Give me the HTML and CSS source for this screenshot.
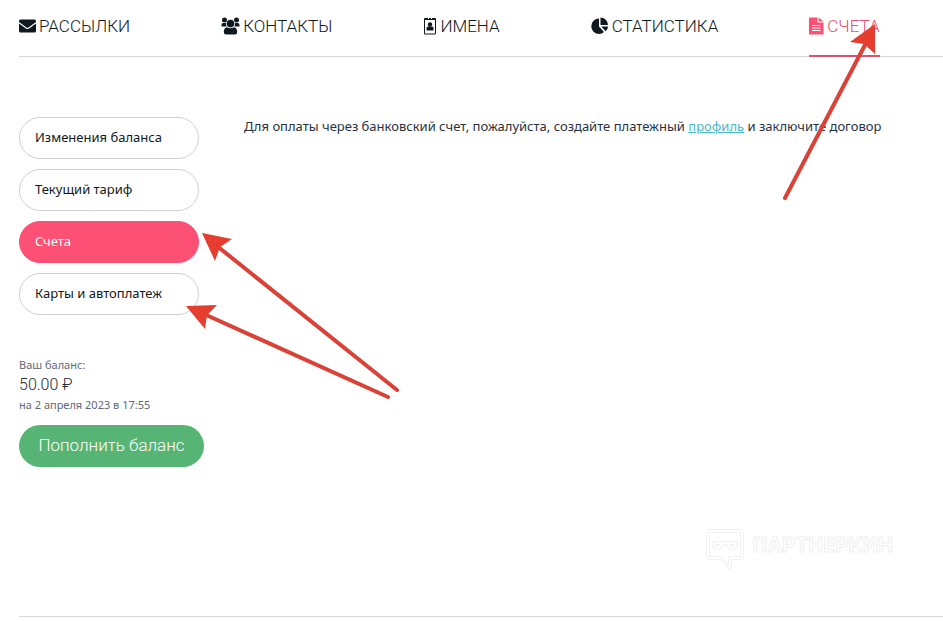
FILE: index.html
```html
<!DOCTYPE html>
<html lang="ru">
<head>
    <meta charset="UTF-8">
    <meta name="viewport" content="width=device-width, initial-scale=1.0">
    <title>Счета</title>
    <link rel="stylesheet" href="styles.css">
</head>
<body>
    <!-- Main menu -->
    <nav class="main-menu">
        <a href="#">
            <svg width="17" height="14" viewBox="0 0 17 14"><path d="M1.500 0.500H15.500Q17 0.500 17 2V3L9.500 8.400Q8.500 9 7.500 8.400L0 3V2Q0 0.500 1.500 0.500ZM0 4.600L6.900 9.500Q8.500 10.500 10.100 9.500L17 4.600V12Q17 13.500 15.500 13.500H1.500Q0 13.500 0 12Z"/></svg>
            <span>РАССЫЛКИ</span>
        </a>
        <a href="#">
            <svg width="19" height="18" viewBox="0 0 19 18"><circle cx="3.500" cy="3" r="2.500"/><circle cx="15.500" cy="3" r="2.500"/><path d="M0.500 9.500V8Q0.500 6 2.300 6H5Q4.800 8.500 5.700 9.500ZM18.500 9.500V8Q18.500 6 16.700 6H14Q14.200 8.500 13.300 9.500Z"/><circle cx="9.500" cy="6.600" r="3.800"/><path d="M6 10.300Q9.500 12.300 13 10.300Q16.200 11 16.200 15Q16.200 17.500 14 17.500H5Q2.800 17.500 2.800 15Q2.800 11 6 10.300Z"/></svg>
            <span>КОНТАКТЫ</span>
        </a>
        <a href="#">
            <svg width="14" height="18" viewBox="0 0 14 18"><path fill-rule="evenodd" d="M2 1H5V2H6V1H8V2H9V1H12Q13 1 13 2V16.500Q13 17.500 12 17.500H2Q1 17.500 1 16.500V2Q1 1 2 1ZM2 3V16.500H12V3Z"/><circle cx="7" cy="7.500" r="2.200"/><path d="M3.500 13.500V11Q3.500 9.500 5 9.500H9Q10.500 9.500 10.500 11V13.500Z"/></svg>
            <span>ИМЕНА</span>
        </a>
        <a href="#">
            <svg width="18" height="18" viewBox="0 0 18 18"><path d="M8 1.500V9.500L13 15Q11 17 8 17A7.700 7.700 0 0 1 8 1.500Z"/><path d="M9.500 0.500A7.500 7.500 0 0 1 17 8H9.500Z"/><path d="M10.300 9.500H17Q17 12.500 14.600 14.300Z"/></svg>
            <span>СТАТИСТИКА</span>
        </a>
        <a href="#" class="active">
            <svg width="15" height="18" viewBox="0 0 15 18"><path fill-rule="evenodd" d="M1 0.500H8.500V5.500H14.500V16.500Q14.500 17.500 13.500 17.500H1Q0 17.500 0 16.500V1.500Q0 0.500 1 0.500ZM3 8V9H11.500V8ZM3 10.500V11.500H11.500V10.500ZM3 13V14H11.500V13Z"/><path d="M9.700 0.500L14.500 4.500H9.700Z"/></svg>
            <span>СЧЕТА</span>
        </a>
    </nav>

    <div class="content">
        <aside class="sidebar">
            <nav class="side-menu">
                <a href="#">Изменения баланса</a>
                <a href="#">Текущий тариф</a>
                <a href="#" class="active">Счета</a>
                <a href="#">Карты и автоплатеж</a>
            </nav>

            <div class="balance">
                <div class="balance-note">Ваш баланс:</div>
                <div class="balance-sum">50.00 ₽</div>
                <div class="balance-note">на 2 апреля 2023 в 17:55</div>
            </div>
            <button type="button" class="pay-button">Пополнить баланс</button>
        </aside>

        <main class="main">
            <p>Для оплаты через банковский счет, пожалуйста, создайте платежный <a href="#">профиль</a> и заключите договор</p>
        </main>
    </div>

    <footer class="footer">
        <div class="brand">
            <svg width="38" height="42" viewBox="0 0 38 42"><path d="M4 0.500H34Q37.500 0.500 37.500 4V27Q37.500 30.500 34 30.500H25.500V38Q25 42 22 39Q18 31 13 30.500H4Q0.500 30.500 0.500 27V4Q0.500 0.500 4 0.500ZM3.500 3.500V27.500H14Q19 29 22.500 36V27.500H34.500V3.500Z"/><path d="M6.500 12.500H31.500V16Q31.500 20.500 27 20.500Q22 20.500 21 15.500H17Q16 20.500 11 20.500Q6.500 20.500 6.500 16ZM9.500 15.500Q9.500 17.500 11 17.500Q13 17.500 13.500 15.500ZM24.500 15.500Q25 17.500 27 17.500Q28.500 17.500 28.500 15.500Z"/></svg>
            <span>ПАРТНЕРКИН</span>
        </div>
    </footer>

    <!-- Arrows over the page -->
    <svg class="arrows" width="943" height="621" viewBox="0 0 943 621" aria-hidden="true">
        <path class="line" d="M785 198L866 43M397 390L217 246M388 397L204 314"/>
        <path class="head" d="M875 24L850 42L864 44L875 54ZM202 233L232 239L220 247L215 261ZM186 306L217 305L207 315L205 329Z"/>
    </svg>
</body>
</html>
```
FILE: styles.css
```css
* { box-sizing: border-box; }
body { position: relative; margin: 0; padding-left: 19px; font-family: "Noto Sans", "Open Sans", sans-serif; font-size: 13px; line-height: 20px; color: #263240; background: #fff; }

.main-menu { display: flex; gap: 91px; height: 57px; border-bottom: 1px solid #d5d7d9; }
.main-menu a { display: flex; align-items: center; gap: 3px; height: 57px; padding-bottom: 3px; border-bottom: 2px solid transparent; font-family: Roboto, sans-serif; font-size: 17px; font-weight: 300; color: #101820; text-decoration: none; white-space: nowrap; }
.main-menu svg { flex: none; fill: #101820; }
.main-menu .active { color: #e0506f; border-color: #d9536f; }
.main-menu .active svg { fill: #fc5074; }

.content { display: flex; gap: 40px; padding-top: 60px; }
.sidebar { flex: none; width: 185px; }
.side-menu { display: flex; flex-direction: column; gap: 10px; width: 180px; }
.side-menu a { height: 42px; padding: 0 15px; border: 1px solid #ced2d8; border-radius: 21px; line-height: 39px; color: #111820; text-decoration: none; white-space: nowrap; }
.side-menu .active { color: #fff; background: #fc5074; border-color: #fc5074; }

.balance { margin-top: 40px; color: #626875; }
.balance-note { font-size: 11px; }
.balance-sum { font-family: Roboto, sans-serif; font-size: 16px; font-weight: 300; color: #222b38; }
.pay-button { width: 100%; height: 42px; margin-top: 10px; padding: 0 0 2px; border: 0; border-radius: 21px; background: #56b574; color: #fff; font-family: Roboto, sans-serif; font-size: 17px; font-weight: 300; cursor: pointer; }

.main p { margin: 0; line-height: 18px; }
.main a { color: #4ab8cb; }

.footer { display: flex; justify-content: flex-end; height: 150px; padding: 62px 50px 0 0; border-bottom: 1px solid #d5d7d9; }
.brand { display: flex; gap: 8px; height: 42px; }
.brand svg { fill: none; stroke: #f0f0f0; }
.brand span { font-family: Inter, sans-serif; font-size: 20px; font-weight: 700; line-height: 32px; color: #fff; -webkit-text-stroke: 1px #f0f0f0; }

.arrows { position: absolute; top: 0; left: 0; pointer-events: none; }
.arrows .line { fill: none; stroke: #db4237; stroke-width: 4; stroke-linecap: round; }
.arrows .head { fill: #e63d31; }
```
